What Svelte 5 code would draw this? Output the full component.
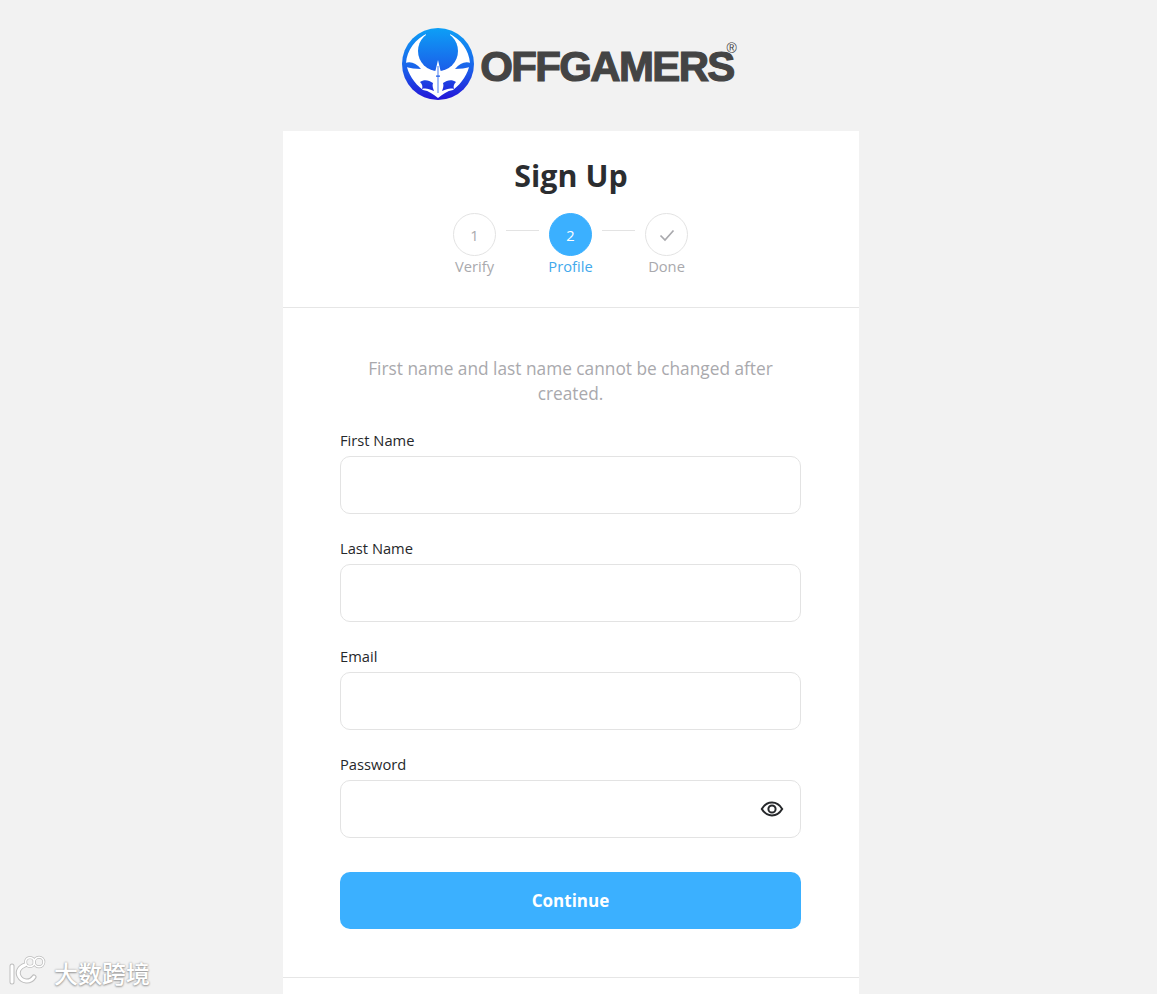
<script>
	let steps = [
		{ label: 'Verify', mark: '1' },
		{ label: 'Profile', mark: '2', active: true },
		{ label: 'Done', check: true }
	]
	let fields = ['First Name', 'Last Name', 'Email']
</script>

<div class="page">
	<header class="brand">
		<svg class="emblem" viewBox="0 0 72 72" aria-hidden="true">
			<defs>
				<linearGradient id="orb" gradientUnits="userSpaceOnUse" x1="0" y1="0" x2="0" y2="72">
					<stop offset="0" stop-color="#0d9ff6" />
					<stop offset="0.55" stop-color="#1a63ea" />
					<stop offset="1" stop-color="#2414d8" />
				</linearGradient>
			</defs>
			<circle cx="36" cy="36" r="36" fill="url(#orb)" />
			<!-- white crescents and lower body -->
			<path
				fill="#fff"
				d="M26 5 C13 11 5 22 4 35 C6 46 12 55 21 62 C27 63 31 66 36 70 C41 66 45 63 51 62 C60 55 66 46 68 35 C67 22 59 11 46 5 Z"
			/>
			<circle cx="36" cy="23" r="20" fill="url(#orb)" />
			<!-- top notch between the crescent tips -->
			<path fill="url(#orb)" d="M24 3 H48 V14 H24 Z" />
			<!-- side wings -->
			<path fill="url(#orb)" d="M3 35 C9 33 14 35 19 41 C14 41 8 40 4 39 Z" />
			<path fill="url(#orb)" d="M69 35 C63 33 58 35 53 41 C58 41 64 40 68 39 Z" />
			<!-- lower lobes -->
			<path fill="url(#orb)" d="M18 54 C22 51 27 52 31 55 C30 58 31 60 32 63 C27 61 24 60 20 61 C21 58 20 56 18 54 Z" />
			<path fill="url(#orb)" d="M54 54 C50 51 45 52 41 55 C42 58 41 60 40 63 C45 61 48 60 52 61 C51 58 52 56 54 54 Z" />
			<!-- spear -->
			<path fill="#fff" d="M36 32 L38.6 43 L37.6 48 L37.6 64 L36 69 L34.4 64 L34.4 48 L33.4 43 Z" />
			<path fill="#1c5cea" d="M35.6 38 H36.4 V65 H35.6 Z M34 47.5 H38 V48.7 H34 Z" />
		</svg>
		<span class="wordmark">OFFGAMERS<sup>®</sup></span>
	</header>

	<main class="card">
		<section class="top">
			<h1>Sign Up</h1>
			<ol class="stepper">
				{#each steps as step, i}
					{#if i > 0}<li class="link" aria-hidden="true"></li>{/if}
					<li class="step" class:active={step.active}>
						<span class="dot">
							{#if step.check}
								<svg viewBox="0 0 16 16" width="16" height="16" aria-hidden="true">
									<path d="M1.5 8.5 L6 13 L14.5 3.5" fill="none" stroke="#a9a9ad" stroke-width="1.7" />
								</svg>
							{:else}
								{step.mark}
							{/if}
						</span>
						<span class="name">{step.label}</span>
					</li>
				{/each}
			</ol>
		</section>

		<form class="body">
			<p class="note">First name and last name cannot be changed after created.</p>
			{#each fields as field}
				<label class="field">
					<span>{field}</span>
					<input type="text" />
				</label>
			{/each}
			<label class="field">
				<span>Password</span>
				<div class="secret">
					<input type="password" />
					<svg class="eye" viewBox="0 0 24 24" width="24" height="24" aria-hidden="true">
						<path
							d="M1.8 12 C4.5 7.6 8 5.6 12 5.6 C16 5.6 19.5 7.6 22.2 12 C19.5 16.4 16 18.4 12 18.4 C8 18.4 4.5 16.4 1.8 12 Z"
							fill="none"
							stroke="#26282b"
							stroke-width="2"
						/>
						<circle cx="12" cy="12" r="3.6" fill="none" stroke="#26282b" stroke-width="2" />
					</svg>
				</div>
			</label>
			<button type="button">Continue</button>
		</form>
		<div class="foot"></div>
	</main>

	<div class="stamp">
		<svg class="stamp-logo" viewBox="0 0 42 30" width="42" height="30" aria-hidden="true">
			<g fill="none" stroke="#bdbdbd" stroke-width="5" stroke-linecap="round">
				<path d="M4 11 V27" />
				<path d="M17 10 C11 12 9 17 11 21 C14 27 22 28 26 22" />
				<circle cx="22" cy="7" r="4.4" stroke-width="3" />
				<circle cx="31" cy="7" r="4.8" stroke-width="3" />
			</g>
			<g fill="none" stroke="#fff" stroke-width="3" stroke-linecap="round">
				<path d="M4 11 V27" />
				<path d="M17 10 C11 12 9 17 11 21 C14 27 22 28 26 22" />
				<circle cx="22" cy="7" r="4.4" stroke-width="1.6" />
				<circle cx="31" cy="7" r="4.8" stroke-width="1.6" />
			</g>
		</svg>
		<span class="stamp-cn">大数跨境</span>
	</div>
</div>

<style>
	:global(body) {
		background: #f2f2f2;
		font-family: 'Open Sans', 'Noto Sans', 'Noto Sans CJK SC', sans-serif;
	}
	.page {
		position: relative;
		width: calc(100vw - 15px);
		height: 100vh;
		overflow: hidden;
	}
	.brand {
		height: 131px;
		display: flex;
		align-items: center;
		justify-content: center;
		gap: 6px;
		padding-bottom: 5px;
		box-sizing: border-box;
	}
	.emblem {
		width: 72px;
		height: 72px;
		margin-top: 2px;
		margin-left: 1px;
	}
	.wordmark {
		position: relative;
		font-family: 'Liberation Sans', Arial, sans-serif;
		font-weight: 700;
		font-size: 42px;
		line-height: 1;
		letter-spacing: -1.65px;
		color: #444;
		-webkit-text-stroke: 1.2px #444;
		margin-top: 8px;
		margin-right: 7px;
	}
	.wordmark sup {
		position: absolute;
		right: -3px;
		top: -6px;
		font-size: 14px;
		line-height: 16px;
		font-weight: 400;
		letter-spacing: 0;
		-webkit-text-stroke: 0;
	}
	.card {
		width: 576px;
		margin: 0 auto;
		background: #fff;
	}
	.top {
		height: 177px;
		box-sizing: border-box;
		padding-top: 25px;
		border-bottom: 1px solid #e6e6e6;
	}
	h1 {
		margin: 0;
		text-align: center;
		font-size: 30.4px;
		line-height: 40px;
		font-weight: 700;
		color: #2b2d30;
	}
	.stepper {
		list-style: none;
		margin: 17px 0 0;
		padding: 0 1px 0 0;
		display: flex;
		justify-content: center;
	}
	.step {
		width: 43px;
		display: flex;
		flex-direction: column;
		align-items: center;
		white-space: nowrap;
	}
	.dot {
		width: 43px;
		height: 43px;
		box-sizing: border-box;
		border: 1px solid #e3e3e3;
		border-radius: 50%;
		display: flex;
		align-items: center;
		justify-content: center;
		font-size: 14.7px;
		color: #a9a9ad;
	}
	.name {
		font-size: 14.7px;
		line-height: 20px;
		color: #a9a9ad;
	}
	.active .dot {
		background: #3bb0ff;
		border-color: #3bb0ff;
		color: #fff;
	}
	.active .name {
		color: #42a9ec;
	}
	.link {
		width: 33px;
		height: 1px;
		margin: 17px 10px 0;
		background: #e3e3e3;
	}
	.body {
		padding: 48px 58px 48px 57px;
		display: flex;
		flex-direction: column;
	}
	.note {
		margin: 0 0 24px;
		padding: 0 20px;
		text-align: center;
		font-size: 17.3px;
		line-height: 25px;
		color: #a9a9ad;
	}
	.field {
		display: block;
		margin-bottom: 24px;
	}
	.field span {
		display: block;
		font-size: 14.7px;
		line-height: 20px;
		margin-bottom: 6px;
		color: #26282b;
	}
	input {
		display: block;
		width: 100%;
		height: 58px;
		box-sizing: border-box;
		border: 1px solid #e3e3e3;
		border-radius: 10px;
		background: #fff;
		padding: 0 16px;
		font: inherit;
		outline: none;
	}
	.secret {
		position: relative;
	}
	.eye {
		position: absolute;
		right: 17px;
		top: 17px;
	}
	button {
		height: 57px;
		margin-top: 10px;
		border: none;
		border-radius: 10px;
		background: #3bb0ff;
		color: #fff;
		font: inherit;
		font-size: 17px;
		font-weight: 700;
	}
	.foot {
		border-top: 1px solid #e6e6e6;
		height: 40px;
	}
	.stamp {
		position: absolute;
		left: 8px;
		top: 955px;
		display: flex;
		align-items: flex-start;
		gap: 4px;
		color: #fff;
		text-shadow: 0 0 2px #9a9a9a, 0 1px 2px #9a9a9a;
	}
	.stamp-cn {
		font-family: 'Noto Sans CJK SC', sans-serif;
		font-size: 24px;
		font-weight: 500;
		line-height: 34px;
		margin-top: 1px;
	}
</style>
